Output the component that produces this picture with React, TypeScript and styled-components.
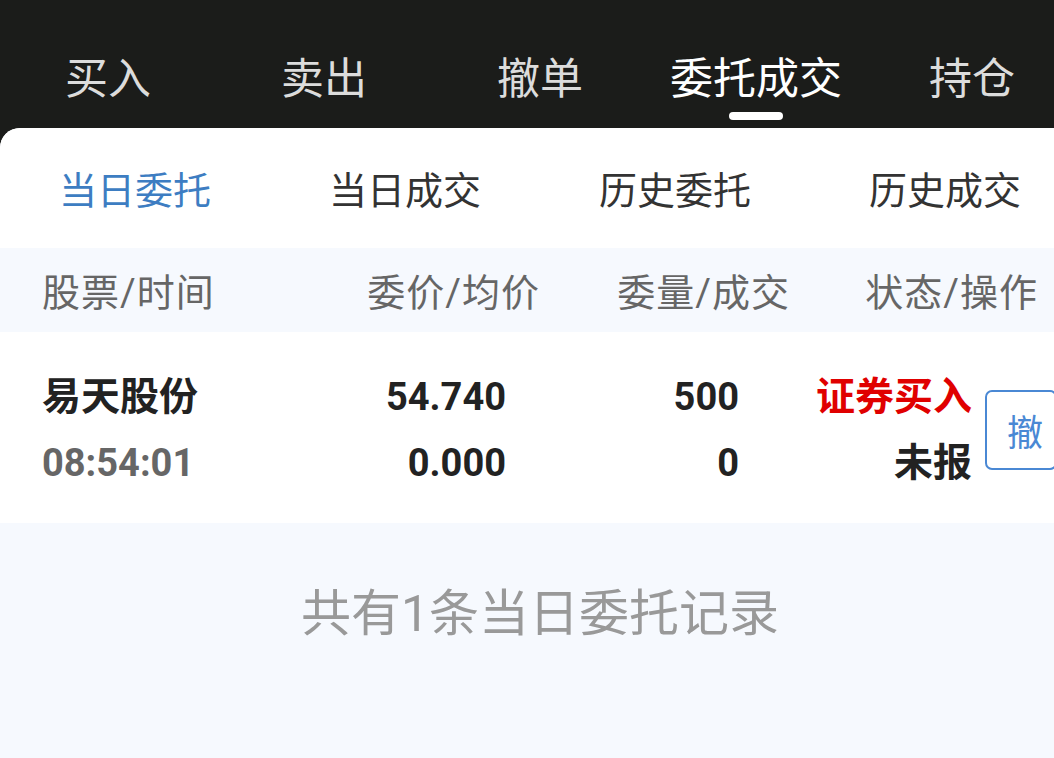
import React from "react";
import styled, { createGlobalStyle } from "styled-components";

const Global = createGlobalStyle`
  html, body {
    margin: 0;
    padding: 0;
    overflow: hidden;
    background: #f6f9fe;
  }
  body {
    font-family: Roboto, "Noto Sans CJK SC", "Noto Sans", sans-serif;
    -webkit-font-smoothing: antialiased;
  }
`;

const Page = styled.div`
  width: 1080px;
  height: 758px;
  background: #1b1c1a;
  display: flex;
  flex-direction: column;
`;

const TopBar = styled.nav`
  height: 128px;
  display: grid;
  grid-template-columns: repeat(5, 1fr);
  flex-shrink: 0;
`;

const TopTab = styled.div<{ $active?: boolean }>`
  display: flex;
  flex-direction: column;
  align-items: center;
  padding-top: 57px;
  box-sizing: border-box;
  font-size: 43px;
  line-height: 44px;
  color: ${(p) => (p.$active ? "#ffffff" : "#dcdcdc")};
`;

const Indicator = styled.span`
  margin-top: 11px;
  width: 54px;
  height: 8px;
  border-radius: 4px;
  background: #ffffff;
`;

const Panel = styled.main`
  flex: 1;
  background: #f6f9fe;
  border-radius: 20px 20px 0 0;
  overflow: hidden;
  display: flex;
  flex-direction: column;
`;

const SubTabs = styled.div`
  height: 120px;
  background: #ffffff;
  display: grid;
  grid-template-columns: repeat(4, 1fr);
  align-items: center;
  padding-top: 6px;
  box-sizing: border-box;
`;

const SubTab = styled.div<{ $active?: boolean }>`
  text-align: center;
  font-size: 38px;
  line-height: 44px;
  color: ${(p) => (p.$active ? "#3d7dc2" : "#333333")};
`;

const HeaderRow = styled.div`
  height: 84px;
  background: #f6f9fe;
  display: grid;
  grid-template-columns: 248px 250px 250px 248px;
  align-items: center;
  padding: 6px 42px 0;
  box-sizing: border-box;
`;

const HeaderCell = styled.div<{ $left?: boolean }>`
  text-align: ${(p) => (p.$left ? "left" : "right")};
  font-size: 38px;
  line-height: 44px;
  letter-spacing: 1px;
  color: #666666;
  white-space: nowrap;
`;

const DataRow = styled.div`
  background: #ffffff;
  display: grid;
  grid-template-columns: 248px 216px 233px 233px 72px;
  align-items: center;
  padding: 32px 0 27px 42px;
  height: 191px;
  box-sizing: border-box;
`;

const Cell = styled.div<{ $left?: boolean }>`
  display: flex;
  flex-direction: column;
  align-items: ${(p) => (p.$left ? "flex-start" : "flex-end")};
`;

const Line = styled.span<{ $color?: string; $size?: number }>`
  font-size: ${(p) => p.$size ?? 39}px;
  line-height: 66px;
  font-weight: 700;
  color: ${(p) => p.$color ?? "#222222"};
  white-space: nowrap;
`;

const CancelButton = styled.button`
  margin-left: 13px;
  width: 72px;
  height: 80px;
  box-sizing: border-box;
  border: 2px solid #4a88d4;
  border-radius: 7px;
  background: #ffffff;
  color: #4a88d4;
  font-family: Roboto, "Noto Sans CJK SC", sans-serif;
  font-size: 36px;
  padding: 0 0 0 8px;
  text-align: center;
`;

const Footer = styled.div`
  flex: 1;
  display: flex;
  justify-content: center;
  padding-top: 61px;
  box-sizing: border-box;
  font-size: 50px;
  line-height: 60px;
  color: #999999;
`;

const topTabs = ["买入", "卖出", "撤单", "委托成交", "持仓"];
const subTabs = ["当日委托", "当日成交", "历史委托", "历史成交"];

export default function App() {
  return (
    <>
      <Global />
      <Page>
        <TopBar>
          {topTabs.map((t) => (
            <TopTab key={t} $active={t === "委托成交"}>
              {t}
              {t === "委托成交" && <Indicator />}
            </TopTab>
          ))}
        </TopBar>
        <Panel>
          <SubTabs>
            {subTabs.map((t, i) => (
              <SubTab key={t} $active={i === 0}>
                {t}
              </SubTab>
            ))}
          </SubTabs>
          <HeaderRow>
            <HeaderCell $left>股票/时间</HeaderCell>
            <HeaderCell>委价/均价</HeaderCell>
            <HeaderCell>委量/成交</HeaderCell>
            <HeaderCell>状态/操作</HeaderCell>
          </HeaderRow>
          <DataRow>
            <Cell $left>
              <Line>易天股份</Line>
              <Line $color="#666666" $size={38}>08:54:01</Line>
            </Cell>
            <Cell>
              <Line $size={38}>54.740</Line>
              <Line $size={38}>0.000</Line>
            </Cell>
            <Cell>
              <Line $size={38}>500</Line>
              <Line $size={38}>0</Line>
            </Cell>
            <Cell>
              <Line $color="#e00000">证券买入</Line>
              <Line>未报</Line>
            </Cell>
            <CancelButton>撤</CancelButton>
          </DataRow>
          <Footer>共有1条当日委托记录</Footer>
        </Panel>
      </Page>
    </>
  );
}
